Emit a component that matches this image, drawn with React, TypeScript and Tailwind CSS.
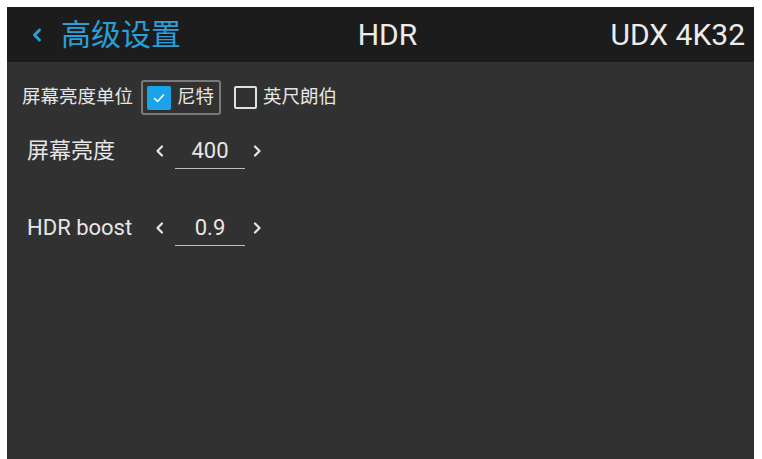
import React from "react";

function Chevron({ dir }: { dir: "left" | "right" }) {
  return (
    <svg width="14" height="16" viewBox="0 0 14 16" className="shrink-0">
      <path
        d={dir === "left" ? "M9 3.5 L4.5 8 L9 12.5" : "M5 3.5 L9.5 8 L5 12.5"}
        stroke="#e6e6e6"
        strokeWidth="2.2"
        fill="none"
        strokeLinecap="round"
        strokeLinejoin="round"
      />
    </svg>
  );
}

function Stepper({ value }: { value: string }) {
  return (
    <div className="flex items-center">
      <Chevron dir="left" />
      <div className="relative ml-[8px] mr-[5px] flex h-[36px] w-[70px] items-center justify-center">
        <span className="text-[22px] leading-none text-[#e6e6e6]">{value}</span>
        <div className="absolute bottom-0 left-0 right-0 h-[1px] bg-[#bdbdbd]" />
      </div>
      <Chevron dir="right" />
    </div>
  );
}

export default function App() {
  return (
    <div
      className="h-[459px] w-[762px] bg-white pl-[7px] pr-[8px] pt-[7px]"
      style={{ fontFamily: "Roboto, 'Noto Sans CJK SC', sans-serif" }}
    >
      <div className="flex h-full flex-col bg-[#313131]">
        <header className="flex h-[55px] items-center bg-[#1c1c1c] pl-[23px] pr-[9px]">
          <div className="flex flex-1 items-center">
            <svg width="14" height="16" viewBox="0 0 14 16" className="mr-[17px]">
              <path d="M9.5 3 L4.5 8 L9.5 13" stroke="#2a9fd8" strokeWidth="3" fill="none" strokeLinecap="round" strokeLinejoin="round" />
            </svg>
            <span className="text-[30px] leading-none text-[#2a9fd8]">高级设置</span>
          </div>
          <div className="text-[30px] leading-none text-[#ececec]">HDR</div>
          <div className="flex flex-1 justify-end text-[30px] leading-none text-[#ececec]">UDX 4K32</div>
        </header>

        <div className="flex flex-col pl-[15px] pt-[18px]">
          <div className="flex h-[35px] items-center">
            <span className="text-[18.5px] leading-none text-[#e6e6e6]">屏幕亮度单位</span>
            <div className="ml-[8px] flex h-[35px] items-center rounded-[3px] border-2 border-[#7a7a7a] pl-[4px] pr-[5px]">
              <span className="flex h-[24px] w-[24px] items-center justify-center rounded-[2px] bg-[#1aa3e8]">
                <svg width="16" height="16" viewBox="0 0 16 16">
                  <path d="M3.5 8.5 L6.5 11.5 L12.5 5" stroke="#ffffff" strokeWidth="1.6" fill="none" strokeLinecap="round" strokeLinejoin="round" />
                </svg>
              </span>
              <span className="ml-[6px] text-[18.5px] leading-none text-[#e6e6e6]">尼特</span>
            </div>
            <div className="ml-[13px] flex items-center">
              <span className="h-[23px] w-[23px] rounded-[2px] border-2 border-[#e0e0e0]" />
              <span className="ml-[6px] text-[18.5px] leading-none text-[#e6e6e6]">英尺朗伯</span>
            </div>
          </div>

          <div className="mt-[18px] flex items-center pl-[5px]">
            <span className="w-[126px] text-[22px] leading-none text-[#e6e6e6]">屏幕亮度</span>
            <Stepper value="400" />
          </div>

          <div className="mt-[41px] flex items-center pl-[5px]">
            <span className="w-[126px] text-[22px] leading-none text-[#e6e6e6]">HDR boost</span>
            <Stepper value="0.9" />
          </div>
        </div>
      </div>
    </div>
  );
}
